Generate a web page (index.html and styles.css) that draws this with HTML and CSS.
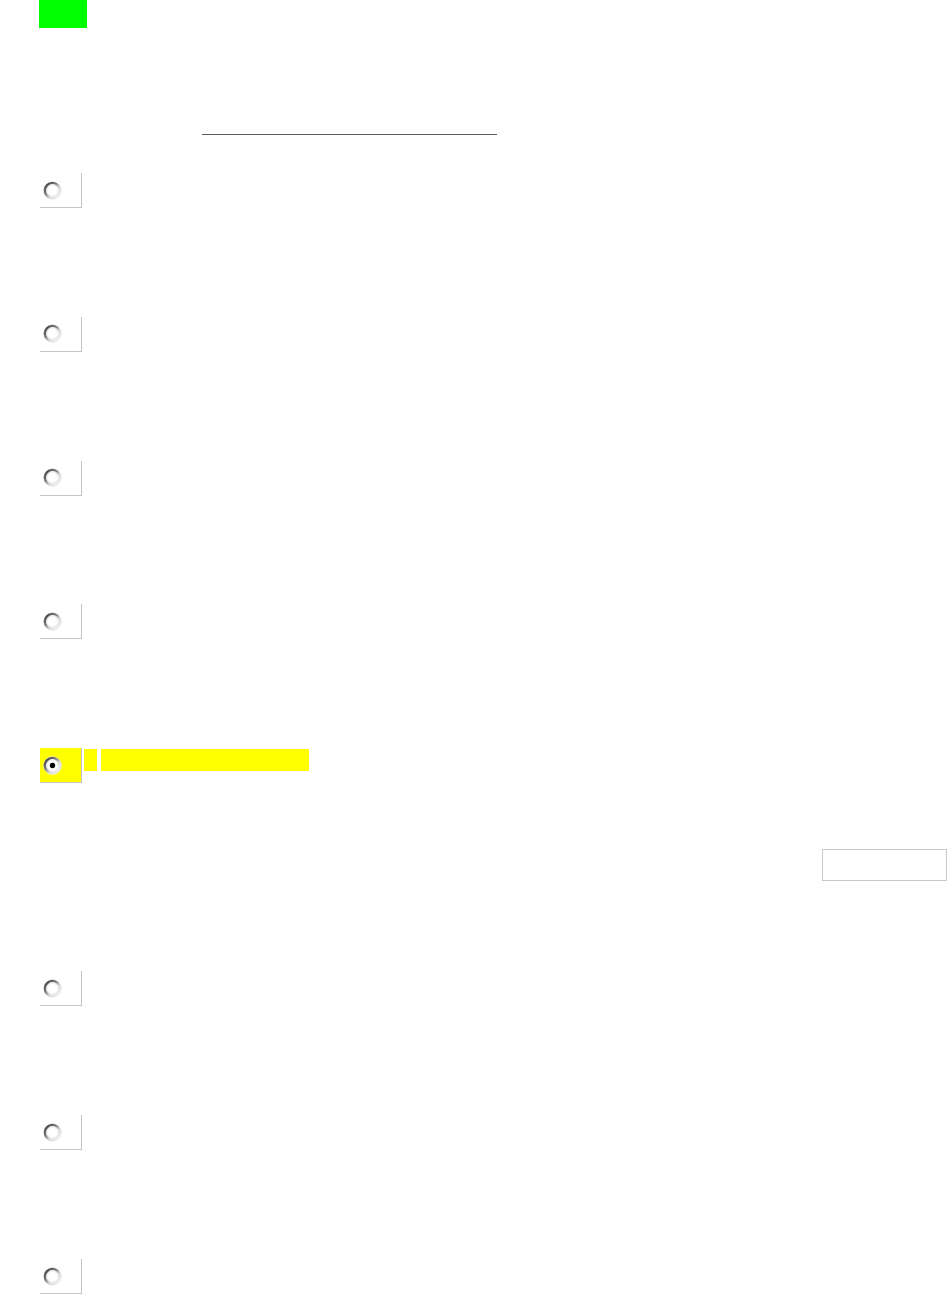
FILE: index.html
```html
<!DOCTYPE html>
<html lang="en">
<head>
    <meta charset="UTF-8">
    <meta name="viewport" content="width=device-width, initial-scale=1">
    <title>Options</title>
    <link rel="stylesheet" href="styles.css">
</head>
<body>
    <svg class="defs" width="0" height="0" aria-hidden="true">
        <defs>
            <linearGradient id="ring" x1="0.1" y1="0.1" x2="0.9" y2="0.9">
                <stop offset="0" stop-color="#4a4a4a"/>
                <stop offset="0.35" stop-color="#7a7a7a"/>
                <stop offset="0.65" stop-color="#d8d8d8"/>
                <stop offset="1" stop-color="#efefef"/>
            </linearGradient>
            <symbol id="radio" viewBox="0 0 19 19">
                <circle cx="9.5" cy="9.5" r="8.8" fill="none" stroke="#ededed" stroke-width="1"/>
                <circle cx="9.5" cy="9.5" r="7.6" fill="#fff" stroke="url(#ring)" stroke-width="2.4"/>
                <circle cx="9.5" cy="9.5" r="5.7" fill="none" stroke="#e4e4e4" stroke-width="1"/>
            </symbol>
        </defs>
    </svg>

    <div class="marker"></div>
    <div class="rule"></div>

    <div class="options">
        <label class="option">
            <span class="radio-box"><svg class="radio"><use href="#radio"/></svg></span>
        </label>
        <label class="option">
            <span class="radio-box"><svg class="radio"><use href="#radio"/></svg></span>
        </label>
        <label class="option">
            <span class="radio-box"><svg class="radio"><use href="#radio"/></svg></span>
        </label>
        <label class="option">
            <span class="radio-box"><svg class="radio"><use href="#radio"/></svg></span>
        </label>
        <label class="option selected">
            <span class="radio-box">
                <svg class="radio"><use href="#radio"/><circle cx="9.5" cy="9.5" r="2.7" fill="#000"/></svg>
            </span>
            <span class="hl hl-short"></span>
            <span class="hl hl-long"></span>
        </label>
        <div class="field">
            <input type="text" class="field-input">
        </div>
        <label class="option">
            <span class="radio-box"><svg class="radio"><use href="#radio"/></svg></span>
        </label>
        <label class="option">
            <span class="radio-box"><svg class="radio"><use href="#radio"/></svg></span>
        </label>
        <label class="option">
            <span class="radio-box"><svg class="radio"><use href="#radio"/></svg></span>
        </label>
    </div>
</body>
</html>
```

FILE: styles.css
```css
html, body {
    margin: 0;
    padding: 0;
}
body {
    background: #fff;
    font-family: "Liberation Sans", Arial, sans-serif;
}
.defs {
    display: block;
    height: 0;
    width: 0;
    overflow: hidden;
}
.marker {
    margin-left: 39px;
    width: 48px;
    height: 28px;
    background: #00ff00;
}
.rule {
    margin: 106px 0 0 202px;
    width: 295px;
    border-top: 1px solid #5c5c5c;
}
.options {
    display: flex;
    flex-direction: column;
    margin-top: 38px;
}
.option {
    display: flex;
    align-items: flex-start;
    margin-left: 40px;
}
.option + .option {
    margin-top: 108.75px;
}
.radio-box {
    display: flex;
    align-items: center;
    width: 38px;
    height: 34px;
    padding-left: 3px;
    border-right: 1px solid #c4c4c4;
    border-bottom: 1px solid #c4c4c4;
}
.radio {
    width: 19px;
    height: 19px;
}
.selected .radio-box {
    background: #ffff00;
}
.hl {
    height: 22px;
    margin-top: 1px;
    background: #ffff00;
}
.hl-short {
    width: 13px;
    margin-left: 2px;
}
.hl-long {
    width: 208px;
    margin-left: 4px;
}
.field {
    display: flex;
    justify-content: flex-end;
    margin-top: 66px;
    padding-right: 2px;
}
.field-input {
    box-sizing: border-box;
    width: 125px;
    height: 32px;
    margin: 0;
    padding: 0 4px;
    border: 1px solid #c8c8c8;
    font: 13px "Liberation Sans", Arial, sans-serif;
}
.field + .option {
    margin-top: 90px;
}
.field ~ .option + .option {
    margin-top: 109px;
}
```
